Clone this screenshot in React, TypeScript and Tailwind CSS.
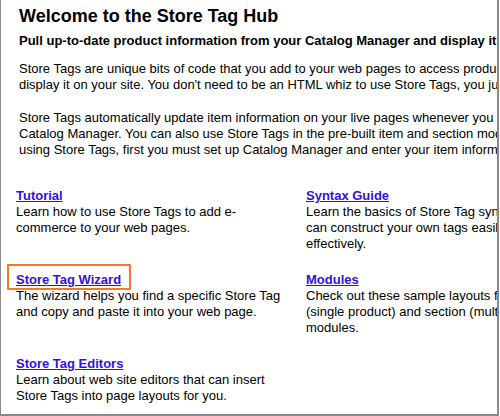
import React from "react";

const linkCls = "font-bold text-[#3311dd] underline underline-offset-[1px] decoration-[1px]";

function Cell({ title, text, boxed }: { title: string; text: string; boxed?: boolean }) {
  return (
    <div className="relative pr-[12px]">
      <a href="#" className={linkCls}>{title}</a>
      {boxed && (
        <div className="absolute left-[-9px] top-[-8px] w-[124px] h-[26px] border-2 border-[#f0792c] rounded-[1px]" />
      )}
      <div>{text}</div>
    </div>
  );
}

export default function App() {
  return (
    <div className="w-[500px] h-[416px] bg-white overflow-hidden">
      <div
        className="w-[499px] h-[416px] border-l border-r-2 border-b-2 border-[#8a8a8a] overflow-hidden text-black text-[13px] leading-[16px]"
        style={{ fontFamily: '"Liberation Sans", Arial, sans-serif' }}
      >
        <div className="w-[700px] pl-[18px] pt-[4px]">
          <h1 className="font-bold text-[18px] leading-[24px]">Welcome to the Store Tag Hub</h1>
          <p className="font-bold mt-[5px]">Pull up-to-date product information from your Catalog Manager and display it on your site.</p>
          <p className="mt-[12px]">
            Store Tags are unique bits of code that you add to your web pages to access product information and
            <br />
            display it on your site. You don't need to be an HTML whiz to use Store Tags, you just copy and paste.
          </p>
          <p className="mt-[17px]">
            Store Tags automatically update item information on your live pages whenever you change it in
            <br />
            Catalog Manager. You can also use Store Tags in the pre-built item and section modules. Before
            <br />
            using Store Tags, first you must set up Catalog Manager and enter your item information.
          </p>
        </div>
        <div className="pl-[15px] pt-[30px] grid grid-cols-[290px_274px] w-[700px] gap-y-[20px]">
          <Cell title="Tutorial" text="Learn how to use Store Tags to add e-commerce to your web pages." />
          <Cell title="Syntax Guide" text="Learn the basics of Store Tag syntax so you can construct your own tags easily and effectively." />
          <Cell boxed title="Store Tag Wizard" text="The wizard helps you find a specific Store Tag and copy and paste it into your web page." />
          <Cell title="Modules" text="Check out these sample layouts for item (single product) and section (multi-product) modules." />
          <Cell title="Store Tag Editors" text="Learn about web site editors that can insert Store Tags into page layouts for you." />
        </div>
      </div>
    </div>
  );
}
